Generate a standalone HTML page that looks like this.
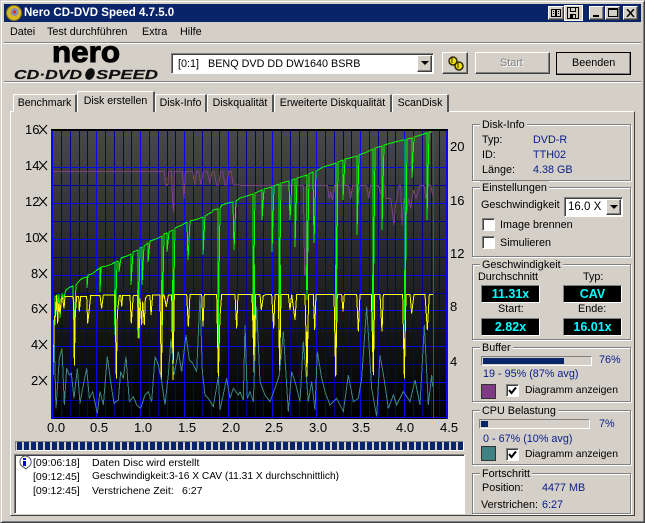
<!DOCTYPE html>
<html><head><meta charset="utf-8"><style>
html,body{margin:0;padding:0;background:#d4d0c8}
#w{position:relative;width:645px;height:523px;overflow:hidden;background:#d4d0c8;font:10.8px/16px "Liberation Sans",sans-serif;color:#000}
#w div,#w span{position:absolute;box-sizing:border-box}
#w span{white-space:pre}
.n{color:#0a1c8c}
.up{background:#d4d0c8;border:1px solid;border-color:#fff #404040 #404040 #fff;box-shadow:inset -1px -1px 0 #808080}
.sunk{background:#fff;border:1px solid;border-color:#808080 #fff #fff #808080;box-shadow:inset 1px 1px 0 #404040}
.g{border:1px solid #808080;box-shadow:inset 1px 1px 0 #fff,1px 1px 0 #fff}
.l{background:#d4d0c8;padding:0 2px;margin-left:-2px;line-height:14px}
.lcd{background:#000;border:1px solid;border-color:#808080 #fff #fff #808080;color:#0ff;font:bold 12.500px/16px "Liberation Sans",sans-serif;text-align:center}
.tab{background:#d4d0c8;border-top:1px solid #fff;border-left:1px solid #fff;border-right:2px solid #555;border-radius:2px 2px 0 0;text-align:center;line-height:17px;font-size:10.600px}
.ax{font-size:13px;line-height:14px}
.d{font-size:10.400px}
.lg{font-size:10.500px}
</style></head><body><div id="w">
<!-- window frame -->
<div style="left:0;top:0;width:645px;height:523px;border:1px solid;border-color:#d4d0c8 #404040 #404040 #d4d0c8;box-shadow:inset 1px 1px 0 #fff,inset -1px -1px 0 #808080"></div>
<div style="left:4px;top:4px;width:637px;height:18px;background:#0a246a"></div>
<svg style="position:absolute;left:5px;top:4px" width="18" height="18" viewBox="0 0 18 18"><circle cx="9" cy="9" r="7.500" fill="#d8b820" stroke="#8a7510"/><circle cx="9.500" cy="8" r="4" fill="#8c8cb8"/><circle cx="9.500" cy="8" r="1.600" fill="#d03020"/></svg>
<span style="left:24px;top:6px;color:#fff;font:bold 11.500px/14px 'Liberation Sans',sans-serif">Nero CD-DVD Speed 4.7.5.0</span>
<div class="up" style="left:548px;top:6px;width:16px;height:14px"></div>
<svg style="position:absolute;left:550px;top:8px" width="12" height="10"><path d="M1.500 1.500h4v7h-4zM6.500 1.500h4v7h-4zM3 3.500h1M3 5.500h1M8 3.500h1M8 5.500h1" fill="none" stroke="#000"/></svg>
<div style="left:564px;top:5px;width:19px;height:16px;background:#d4d0c8;border:1px solid #fff"></div>
<svg style="position:absolute;left:567px;top:7px" width="13" height="12"><path d="M.500.500h11v11h-11zM3.500.500v4h5v-4M3.500 11.500v-4h5v4" fill="none" stroke="#000"/><rect x="4" y="8" width="2" height="3"/></svg>
<div class="up" style="left:589px;top:6px;width:15px;height:14px"></div><div style="left:593px;top:15px;width:6px;height:2px;background:#000"></div>
<div class="up" style="left:605px;top:6px;width:15px;height:14px"></div><div style="left:608px;top:8px;width:10px;height:9px;border:1px solid #000;border-top-width:2px"></div>
<div class="up" style="left:623px;top:6px;width:15px;height:14px"></div>
<svg style="position:absolute;left:626px;top:9px" width="9" height="8"><path d="M1 0l7 8M8 0l-7 8" stroke="#000" stroke-width="1.500"/></svg>
<!-- menu -->
<span style="left:10px;top:24px">Datei</span><span style="left:47px;top:24px">Test durchführen</span><span style="left:142px;top:24px">Extra</span><span style="left:180px;top:24px">Hilfe</span>
<div style="left:4px;top:42px;width:637px;height:2px;background:#808080;border-bottom:1px solid #fff"></div>
<div style="left:4px;top:81px;width:637px;height:2px;background:#808080;border-bottom:1px solid #fff"></div>
<!-- logo -->
<svg style="position:absolute;left:0;top:40px" width="170" height="42"><text x="52" y="22" font-family="Liberation Sans" font-weight="bold" font-size="30" stroke="#000" stroke-width="1" textLength="68" lengthAdjust="spacingAndGlyphs">nero</text><text x="14" y="39" font-family="Liberation Sans" font-weight="bold" font-style="italic" font-size="13" fill="#111" stroke="#111" stroke-width=".2" textLength="68" lengthAdjust="spacingAndGlyphs">CD·DVD</text><ellipse cx="90" cy="34" rx="4.500" ry="6" fill="#111" transform="rotate(25 90 34)"/><text x="96" y="39" font-family="Liberation Sans" font-weight="bold" font-style="italic" font-size="13" fill="#111" stroke="#111" stroke-width=".2" textLength="62" lengthAdjust="spacingAndGlyphs">SPEED</text></svg>
<!-- combo & buttons -->
<div class="sunk" style="left:171px;top:53px;width:263px;height:21px"></div>
<span style="left:178px;top:56px">[0:1]   BENQ DVD DD DW1640 BSRB</span>
<div class="up" style="left:417px;top:55px;width:15px;height:17px"></div><div style="left:421px;top:61px;width:0;height:0;border:4px solid transparent;border-top:4px solid #000;border-bottom:0"></div>
<div class="up" style="left:442px;top:52px;width:26px;height:22px"></div>
<svg style="position:absolute;left:446px;top:55px" width="20" height="16"><circle cx="7" cy="6" r="4" fill="#f0e010" stroke="#302800" stroke-width="1.500"/><circle cx="13" cy="11" r="4" fill="#f0e010" stroke="#302800" stroke-width="1.500"/><path d="M6 2v6M12 8v5" stroke="#302800"/></svg>
<div class="up" style="left:475px;top:52px;width:75px;height:22px"></div><span style="left:500px;top:55px;color:#808080;text-shadow:1px 1px 0 #fff">Start</span>
<div class="up" style="left:556px;top:52px;width:75px;height:23px;outline:1px solid #000;outline-offset:-1px"></div><span style="left:572px;top:55px">Beenden</span>
<!-- tab panel -->
<div style="left:10px;top:111px;width:625px;height:405px;border:1px solid;border-color:#fff #404040 #404040 #fff;box-shadow:-1px 0 0 #d4d0c8"></div>
<div class="tab" style="left:13px;top:94px;width:64px;height:18px">Benchmark</div>
<div class="tab" style="left:155px;top:94px;width:52px;height:18px">Disk-Info</div>
<div class="tab" style="left:207px;top:94px;width:67px;height:18px">Diskqualität</div>
<div class="tab" style="left:274px;top:94px;width:118px;height:18px">Erweiterte Diskqualität</div>
<div class="tab" style="left:392px;top:94px;width:57px;height:18px">ScanDisk</div>
<div class="tab" style="left:77px;top:91px;width:78px;height:21px;line-height:19px">Disk erstellen</div>
<!-- chart -->
<div style="left:52px;top:130px;width:396px;height:289px;background:linear-gradient(#484848,#000)"></div>
<svg style="position:absolute;left:0;top:0" width="645" height="523" viewBox="0 0 645 523" fill="none" shape-rendering="crispEdges">
<path stroke="#000090" d="M61.500 131V418M70.500 131V418M79.500 131V418M87.500 131V418M105.500 131V418M114.500 131V418M123.500 131V418M131.500 131V418M149.500 131V418M158.500 131V418M167.500 131V418M175.500 131V418M193.500 131V418M202.500 131V418M211.500 131V418M219.500 131V418M237.500 131V418M246.500 131V418M255.500 131V418M263.500 131V418M281.500 131V418M290.500 131V418M299.500 131V418M307.500 131V418M325.500 131V418M334.500 131V418M343.500 131V418M351.500 131V418M369.500 131V418M378.500 131V418M387.500 131V418M395.500 131V418M413.500 131V418M422.500 131V418M431.500 131V418M439.500 131V418M52 185.500H447M52 221.500H447M52 257.500H447M52 293.500H447M52 328.500H447M52 364.500H447M52 400.500H447"/>
<path stroke="#0808f0" d="M96.500 131V418M140.500 131V418M184.500 131V418M228.500 131V418M272.500 131V418M316.500 131V418M360.500 131V418M404.500 131V418M52 167.500H447M52 203.500H447M52 239.500H447M52 275.500H447M52 310.500H447M52 346.500H447M52 382.500H447M52 417.500H447"/>
<path stroke="#0808f0" stroke-width="2" d="M52 130V419M447 130V419"/>
<path stroke="#000" stroke-width="2" d="M51 130H448"/>
<!-- purple -->
<g transform="translate(0,115) scale(.33333)" stroke="#7d3f88" stroke-width="3">
<path d="M160 170H493L497 210H503L506 170H514L518 262L521 292L523 170H547L552 252L556 170H578L584 210L590 170H596L603 210L610 170H622L630 205L636 170H642L650 210H656L662 170H668L675 210H680L686 170H694L700 210H720"/>
</g>
<g transform="translate(240,115) scale(.33333)" stroke="#7d3f88" stroke-width="3">
<path d="M0 211H190L194 480H197L200 211H262L268 250L272 230L278 255L284 211H325L332 250L338 211H350L354 240L360 211H380L386 250L392 211H415L422 235L430 211H435L438 250H452L462 330L466 275L478 211H482L486 330L492 250L500 300L505 250L512 280L520 225L528 250L535 225L540 211H552L558 250L565 211H572L578 240"/>
</g>
<!-- green -->
<path stroke="#00ff00" d="M55 325V297L57 295V315L59 294L60 318L62 293L63 300L66 290L70 287L73 286L74 330L76 285L80 280L83 278L87 277V288L88 275L92 274L97 270L100 268V292L101 267L107 266L112 264L115 262V335L117 261L119 262V272L121 258L127 256L131 254V285L133 252L138 250V338L140 248L142 247V285L144 246L148 243V262L150 241L156 239L162 236V337L164 234L167 233V252L169 232L173 230V335L175 228L182 225L187 222L188 260L190 221L198 219L203 217V255L205 216L212 212L213 210L218 209V352L220 208L222 205L228 203L233 202L234 250L236 201L240 198L247 196L253 194V335L255 193L260 191L262 190V220L264 189L272 187V252L274 186L279 184V330L281 183L289 181L290 220L292 180L295 179V247L297 178L304 176L307 175V300L309 174L313 172L314 243L316 171L323 167L330 165L336 163V335L338 162L343 160V200L345 159L350 158L357 156V235L359 155L367 152L373 149V335L375 148L382 146V230L384 145L395 142L403 140L405 140V335L407 139L412 138V178L414 137L421 135L427 133V220L429 132H432"/>
<path stroke="#00ff00" stroke-width="2" d="M254 265V320M280 265V310M307 265V290M336 265V320M373 275V310M405 270V320M115 290V325M138 290V330M162 280V325M173 280V325M218 300V345"/>
<!-- yellow -->
<g transform="translate(0,275) scale(.33333)" stroke="#ffff00" stroke-width="3">
<path d="M160 275L163 125H166L170 62L173 145L176 85L180 115L184 70H188L192 100L195 65H218L221 80L223 272L226 115L230 65H236L238 110L242 65H260L263 145L266 120L272 62H300L305 100L310 60H345L349 310L352 115L358 62H362L365 95L368 62H390L394 145L397 100L400 62H414L417 190L420 70L425 150L428 80L433 150L436 70L442 62H450L453 120L458 60H480L484 315L488 60H492L499 95L505 60H515L519 315L523 58H560L565 155L570 58H605L609 155L613 58H650L655 305L660 125L665 58H705L710 160L714 58H720"/>
</g>
<g transform="translate(240,275) scale(.33333)" stroke="#ffff00" stroke-width="3">
<path d="M0 58H36L43 300L47 58H60L64 105L70 62L80 58H95L101 160L105 58H115L119 290L123 58H145L150 105L155 58L165 135L170 58H195L201 305L206 58H220L224 165L228 58H282L287 305L292 58H305L309 110L313 58H350L355 170L360 58H394L400 300L404 58H420L426 170L430 58H488L493 310L498 58H510L515 115L522 58H555L562 165L568 58H580"/>
<path stroke-width="5" d="M42 120V240M119 165V285M201 170V250M287 180V300M400 180V290M493 190V280"/>
</g>
<!-- teal -->
<g transform="translate(0,275) scale(.33333)" stroke="#3f8284" stroke-width="3">
<path d="M160 300L163 210L168 400L172 340L178 250L186 220L193 390L200 280L208 300L214 295L222 370L232 280L240 385L248 340L260 280L268 370L278 350L292 415L300 350L310 390L322 245L332 320L342 385L355 375L362 290L370 310L378 245L388 380L400 365L410 390L422 400L435 360L445 350L455 380L465 245L475 270L485 320L495 390L505 300L513 190L522 300L535 230L545 290L558 180L568 255L578 265L590 290L600 60L607 290L615 360L625 370L640 395L655 305L660 405L680 310L690 370L700 340L715 360L720 350"/>
</g>
<g transform="translate(240,275) scale(.33333)" stroke="#3f8284" stroke-width="3">
<path d="M0 350L10 375L15 150L22 370L30 350L40 380L50 95L60 320L75 360L90 380L105 340L118 300L130 170L145 410L155 290L165 320L180 380L190 200L205 380L215 320L225 405L232 230L245 310L255 350L270 390L290 370L310 410L325 300L340 380L355 370L365 310L380 95L395 340L410 425L420 240L432 310L445 400L460 360L470 390L490 350L510 380L525 315L540 390L553 150L565 390L575 300L578 335"/>
</g>
<path stroke="#d81818" d="M433.500 131V418"/>
</svg>
<!-- axes -->
<span class="ax" style="left:25px;top:123px">16</span><span class="ax" style="left:25px;top:159px">14</span><span class="ax" style="left:25px;top:195px">12</span><span class="ax" style="left:25px;top:231px">10</span>
<span class="ax" style="left:31px;top:267px">8</span><span class="ax" style="left:31px;top:302px">6</span><span class="ax" style="left:31px;top:338px">4</span><span class="ax" style="left:31px;top:374px">2</span>
<svg style="position:absolute;left:38px;top:120px" width="10" height="270" stroke="#000" fill="none"><path d="M1 5l8 9M9 5l-8 9M1 41l8 9M9 41l-8 9M1 77l8 9M9 77l-8 9M1 113l8 9M9 113l-8 9M1 149l8 9M9 149l-8 9M1 184l8 9M9 184l-8 9M1 220l8 9M9 220l-8 9M1 256l8 9M9 256l-8 9"/></svg>
<span class="ax" style="left:47px;top:421px">0.0</span><span class="ax" style="left:90px;top:421px">0.5</span><span class="ax" style="left:134px;top:421px">1.0</span><span class="ax" style="left:178px;top:421px">1.5</span><span class="ax" style="left:222px;top:421px">2.0</span><span class="ax" style="left:265px;top:421px">2.5</span><span class="ax" style="left:309px;top:421px">3.0</span><span class="ax" style="left:352px;top:421px">3.5</span><span class="ax" style="left:396px;top:421px">4.0</span><span class="ax" style="left:440px;top:421px">4.5</span>
<span class="ax" style="left:450px;top:140px">20</span><span class="ax" style="left:450px;top:194px">16</span><span class="ax" style="left:450px;top:247px">12</span><span class="ax" style="left:450px;top:300px">8</span><span class="ax" style="left:450px;top:355px">4</span>
<!-- progress + log -->
<div style="left:15px;top:441px;width:449px;height:10px;border:1px solid;border-color:#808080 #fff #fff #808080;background:repeating-linear-gradient(90deg,#0a246a 0 5px,#d4d0c8 5px 7px) 1px 0"></div>
<div class="sunk" style="left:14px;top:454px;width:451px;height:60px"></div>
<svg style="position:absolute;left:17px;top:455px" width="15" height="15"><path d="M7.500 1a6 6 0 0 1 3 11.500l-1.500 1.500-2-1.500a6 6 0 0 1 .5-11.500z" fill="#fff" stroke="#555"/><rect x="6" y="3" width="3" height="2" fill="#00c"/><rect x="6" y="6" width="3" height="5" fill="#00c"/></svg>
<span class="lg" style="left:33px;top:455px">[09:06:18]</span><span class="lg" style="left:92px;top:455px">Daten Disc wird erstellt</span>
<span class="lg" style="left:33px;top:469px">[09:12:45]</span><span style="left:92px;top:469px;font-size:10.200px">Geschwindigkeit:3-16 X CAV (11.31 X durchschnittlich)</span>
<span class="lg" style="left:33px;top:483px">[09:12:45]</span><span class="lg" style="left:92px;top:483px">Verstrichene Zeit:</span><span class="lg" style="left:182px;top:483px">6:27</span>
<!-- Disk-Info -->
<div class="g" style="left:472px;top:124px;width:159px;height:57px"></div>
<span class="l" style="left:482px;top:118px">Disk-Info</span>
<span style="left:482px;top:132px">Typ:</span><span class="n" style="left:533px;top:132px">DVD-R</span>
<span style="left:482px;top:147px">ID:</span><span class="n" style="left:533px;top:147px">TTH02</span>
<span style="left:482px;top:162px">Länge:</span><span class="n" style="left:533px;top:162px">4.38 GB</span>
<!-- Einstellungen -->
<div class="g" style="left:472px;top:187px;width:159px;height:70px"></div>
<span class="l" style="left:482px;top:181px">Einstellungen</span>
<span style="left:481px;top:197px">Geschwindigkeit</span>
<div class="sunk" style="left:564px;top:197px;width:59px;height:20px"></div>
<span style="left:568px;top:199px;font-size:11.500px">16.0 X</span>
<div class="up" style="left:606px;top:199px;width:15px;height:16px"></div><div style="left:610px;top:205px;border:4px solid transparent;border-top:4px solid #000;border-bottom:0"></div>
<div class="sunk" style="left:482px;top:218px;width:13px;height:13px"></div><span style="left:500px;top:217px">Image brennen</span>
<div class="sunk" style="left:482px;top:236px;width:13px;height:13px"></div><span style="left:500px;top:235px">Simulieren</span>
<!-- Geschwindigkeit -->
<div class="g" style="left:472px;top:264px;width:159px;height:76px"></div>
<span class="l" style="left:482px;top:258px">Geschwindigkeit</span>
<span style="left:478px;top:269px">Durchschnitt</span><span style="left:583px;top:269px">Typ:</span>
<div class="lcd" style="left:481px;top:285px;width:59px;height:18px">11.31x</div>
<div class="lcd" style="left:563px;top:285px;width:59px;height:18px">CAV</div>
<span style="left:498px;top:301px">Start:</span><span style="left:578px;top:301px">Ende:</span>
<div class="lcd" style="left:481px;top:318px;width:59px;height:18px">2.82x</div>
<div class="lcd" style="left:563px;top:318px;width:59px;height:18px">16.01x</div>
<!-- Buffer -->
<div class="g" style="left:472px;top:347px;width:159px;height:55px"></div>
<span class="l" style="left:482px;top:341px">Buffer</span>
<div style="left:481px;top:356px;width:111px;height:10px;border:1px solid;border-color:#808080 #fff #fff #808080"></div>
<div style="left:483px;top:358px;width:81px;height:6px;background:#0a246a"></div>
<span class="n" style="left:599px;top:352px">76%</span>
<span class="n" style="left:483px;top:366px">19 - 95% (87% avg)</span>
<div style="left:481px;top:384px;width:15px;height:15px;background:#7e3a84;border:1px solid #333"></div>
<div class="sunk" style="left:506px;top:384px;width:13px;height:13px"></div>
<svg style="position:absolute;left:508px;top:386px" width="9" height="9"><path d="M1 4l2.500 3L8 1.500" stroke="#000" stroke-width="2" fill="none"/></svg>
<span class="d" style="left:525px;top:383px">Diagramm anzeigen</span>
<!-- CPU -->
<div class="g" style="left:472px;top:410px;width:159px;height:55px"></div>
<span class="l" style="left:482px;top:404px">CPU Belastung</span>
<div style="left:479px;top:419px;width:111px;height:10px;border:1px solid;border-color:#808080 #fff #fff #808080"></div>
<div style="left:481px;top:421px;width:7px;height:6px;background:#0a246a"></div>
<span class="n" style="left:599px;top:416px">7%</span>
<span class="n" style="left:483px;top:431px">0 - 67% (10% avg)</span>
<div style="left:481px;top:446px;width:15px;height:15px;background:#3f8284;border:1px solid #333"></div>
<div class="sunk" style="left:506px;top:448px;width:13px;height:13px"></div>
<svg style="position:absolute;left:508px;top:450px" width="9" height="9"><path d="M1 4l2.500 3L8 1.500" stroke="#000" stroke-width="2" fill="none"/></svg>
<span class="d" style="left:525px;top:447px">Diagramm anzeigen</span>
<!-- Fortschritt -->
<div class="g" style="left:472px;top:473px;width:159px;height:41px"></div>
<span class="l" style="left:482px;top:467px">Fortschritt</span>
<span style="left:482px;top:480px">Position:</span><span class="n" style="left:542px;top:480px">4477 MB</span>
<span style="left:481px;top:497px">Verstrichen:</span><span class="n" style="left:542px;top:497px">6:27</span>
</div></body></html>
